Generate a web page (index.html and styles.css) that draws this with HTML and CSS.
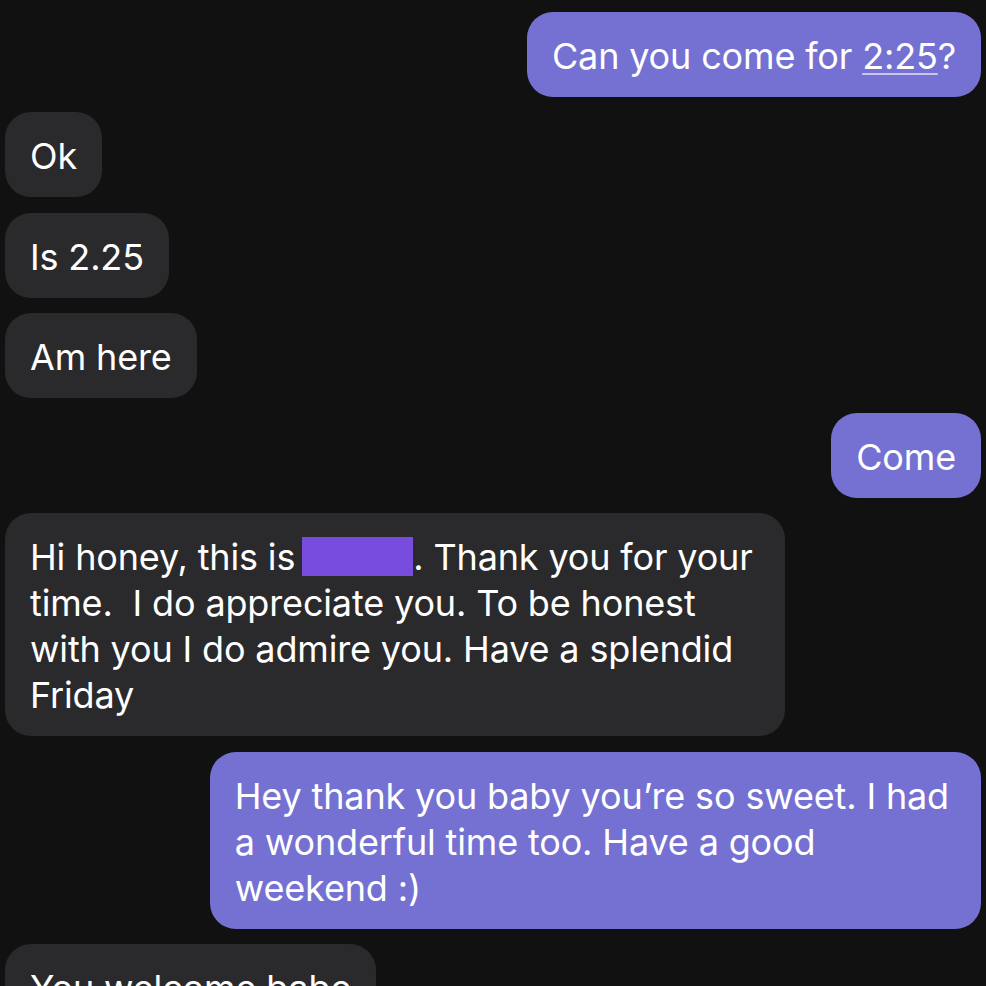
FILE: index.html
```html
<!DOCTYPE html>
<html>
<head>
<meta charset="utf-8">
<link rel="stylesheet" href="styles.css">
</head>
<body>
<div class="chat">
  <div class="msg out"><div class="bubble">Can you come for <span class="link">2:25</span>?</div></div>
  <div class="msg in"><div class="bubble">Ok</div></div>
  <div class="msg in"><div class="bubble">Is 2.25</div></div>
  <div class="msg in"><div class="bubble">Am here</div></div>
  <div class="msg out"><div class="bubble">Come</div></div>
  <div class="msg in"><div class="bubble wide">Hi honey, this is <span class="redact"></span>. Thank you for your<br>time.&nbsp; I do appreciate you. To be honest<br>with you I do admire you. Have a splendid<br>Friday</div></div>
  <div class="msg out"><div class="bubble wide">Hey thank you baby you’re so sweet. I had<br>a wonderful time too. Have a good<br>weekend :)</div></div>
  <div class="msg in"><div class="bubble">You welcome babe</div></div>
</div>
</body>
</html>
```
FILE: styles.css
```css
html, body {
  margin: 0;
  padding: 0;
  background: #111112;
  height: 100%;
  overflow: hidden;
}
.chat {
  display: flex;
  flex-direction: column;
  gap: 15.3px;
  padding: 12px 5px 0 5px;
  font-family: Inter, Roboto, "Liberation Sans", sans-serif;
  font-size: 36px;
  letter-spacing: -0.15px;
  color: #ffffff;
}
.msg {
  display: flex;
}
.msg.in { justify-content: flex-start; }
.msg.out { justify-content: flex-end; }
.bubble {
  line-height: 46px;
  padding: 21px 25px 18px 25px;
  border-radius: 26px;
  background: #2a2a2c;
  white-space: nowrap;
}
.out .bubble {
  background: #7571d2;
}
.bubble.wide {
  padding-right: 32px;
}
.link {
  text-decoration: underline;
  text-decoration-color: #c9c7f0;
  text-decoration-thickness: 2px;
  text-underline-offset: 4px;
}
.redact {
  display: inline-block;
  width: 111px;
  height: 39px;
  background: #794ce0;
  vertical-align: -6px;
  margin-left: -3px;
}
```
